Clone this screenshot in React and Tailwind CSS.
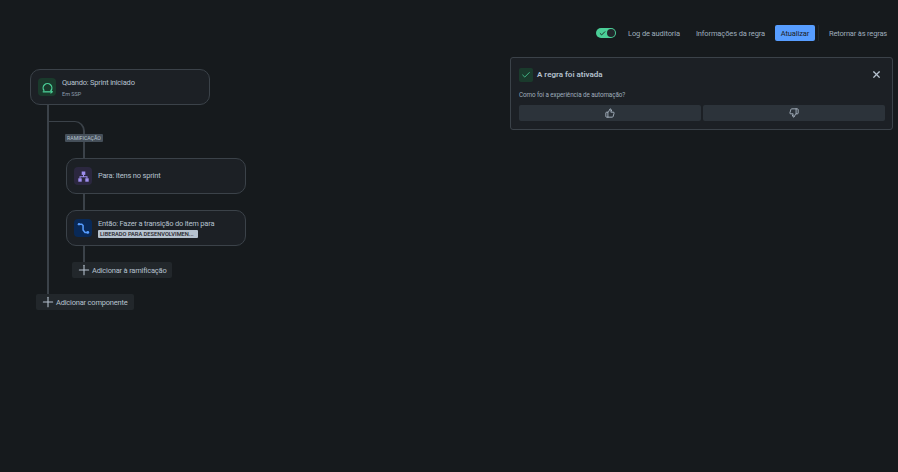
import { Check, Plus, ThumbsDown, ThumbsUp, X } from 'lucide-react'

function NodeCard({ className, icon, iconBg, children }) {
  return (
    <div className={`flex items-center w-[180px] h-[36px] rounded-[10px] border border-[#3b4249] bg-[#1c2025] pl-[7px] gap-[6px] ${className || ''}`}>
      <div className={`w-[18px] h-[18px] rounded-[4px] flex items-center justify-center shrink-0 ${iconBg}`}>
        {icon}
      </div>
      <div className="min-w-0">{children}</div>
    </div>
  )
}

function TriggerIcon() {
  return (
    <svg width="13" height="13" viewBox="0 0 12 12" fill="none" stroke="#4bce97" strokeWidth="1.2">
      <path d="M3 9 A4 4 0 1 1 9 9" />
      <path d="M1.6 10 H10.4" />
      <path d="M8.8 8.6 L10.4 10 L8.8 11.4" strokeWidth="1" />
    </svg>
  )
}

function BranchIcon() {
  return (
    <svg width="11" height="11" viewBox="0 0 11 11" fill="#9f8fef">
      <rect x="3.7" y="0.5" width="3.6" height="3.4" />
      <rect x="0.3" y="7.3" width="3.4" height="3.4" />
      <rect x="7.3" y="7.3" width="3.4" height="3.4" />
      <path d="M5 3.5h1v1.7h3.5v2.4h-1V6.2H2.5v1.4h-1V5.2H5z" />
    </svg>
  )
}

function TransitionIcon() {
  return (
    <svg width="13" height="13" viewBox="0 0 12 12" fill="none" stroke="#579dff" strokeWidth="1.4">
      <path d="M1.8 2 H4.4 L5.6 3.2 V7.4 L7.4 9.6 H10" />
      <circle cx="1.8" cy="2" r="1.1" fill="#579dff" stroke="none" />
      <circle cx="10" cy="9.6" r="1.3" fill="#579dff" stroke="none" />
    </svg>
  )
}

function AddButton({ label, className }) {
  return (
    <div className={`flex items-center h-[16px] bg-[#22272b] rounded-[2px] text-[7.5px] tracking-[-0.2px] text-[#b6c2cf] pl-[4px] whitespace-nowrap ${className}`}>
      <Plus size={16} strokeWidth={1.6} />
      <span className="pt-[1px]">{label}</span>
    </div>
  )
}

export default function App() {
  return (
    <div className="w-[898px] h-[472px] overflow-hidden bg-[#161a1d] text-[#b6c2cf] font-['Roboto',sans-serif] antialiased">
      <header className="flex items-center justify-end h-[16px] mt-[25px] pr-[11px] text-[7.5px] tracking-[-0.12px] text-[#9fadbc] whitespace-nowrap">
        <div className="w-[20px] h-[10px] rounded-full bg-[#4bce97] flex items-center justify-between pl-[3px] pr-[1px]">
          <Check size={7} strokeWidth={3} className="text-[#161a1d]" />
          <span className="w-[8px] h-[8px] rounded-full bg-[#22272b]" />
        </div>
        <span className="ml-[12px] pt-[1px]">Log de auditoria</span>
        <span className="ml-[16px] pt-[1px]">Informações da regra</span>
        <span className="ml-[10px] w-[40px] h-[16px] pt-[1px] rounded-[2px] bg-[#579dff] text-[#1d2125] flex items-center justify-center">Atualizar</span>
        <span className="ml-[3px] mr-[10px] w-px h-[16px] bg-[#22272b]" />
        <span className="pt-[1px] tracking-[-0.18px]">Retornar às regras</span>
      </header>

      <main className="flex justify-between pr-[5px]">
        <div className="pl-[30px] pt-[28px]">
          <NodeCard icon={<TriggerIcon />} iconBg="bg-[#1a3a2c]">
            <p className="text-[7.5px] tracking-[-0.2px] leading-[11px] text-[#b6c2cf]">Quando: Sprint iniciado</p>
            <p className="text-[5.5px] leading-[7px] mt-[3px] text-[#8c9bab]">Em SSP</p>
          </NodeCard>
          <div className="ml-[17px] w-fit border-l-2 border-[#3b4249] pt-[16px] pb-[16px]">
            <div className="relative ml-[-1px] w-[37px] h-[37px] border-t border-r-2 border-[#3b4249] rounded-tr-[10px]">
              <span className="absolute left-[17px] top-[12px] h-[8px] w-[38px] rounded-[1px] bg-[#454f59] text-[5.2px] leading-[8px] text-center text-[#b6c2cf]">RAMIFICAÇÃO</span>
            </div>
            <div className="ml-[17px]">
              <NodeCard icon={<BranchIcon />} iconBg="bg-[#2b273f]">
                <p className="text-[7.5px] tracking-[-0.2px] text-[#b6c2cf]">Para: Itens no sprint</p>
              </NodeCard>
              <div className="ml-[17px] w-0.5 h-[16px] bg-[#3b4249]" />
              <NodeCard icon={<TransitionIcon />} iconBg="bg-[#092957]">
                <p className="text-[7.5px] tracking-[-0.2px] leading-[11px] whitespace-nowrap text-[#b6c2cf]">Então: Fazer a transição do item para</p>
                <p className="w-[100px] h-[8px] mt-[1px] rounded-[1px] bg-[#b6c2cf] text-[#1d2125] text-[5.7px] leading-[8px] pl-[2px] font-medium whitespace-nowrap">LIBERADO PARA DESENVOLVIMEN...</p>
              </NodeCard>
              <div className="ml-[17px] w-0.5 h-[16px] bg-[#3b4249]" />
              <AddButton label="Adicionar à ramificação" className="ml-[6px] w-[100px]" />
            </div>
          </div>
          <AddButton label="Adicionar componente" className="ml-[6px] w-[98px]" />
        </div>

        <aside className="w-[383px] h-[73px] mt-[16px] rounded-[3px] border border-[#3b4249] bg-[#1c2025] pl-[8px] pr-[7px] pt-[9px]">
          <div className="flex items-center h-[15px]">
            <div className="w-[14px] h-[14px] rounded-[2px] bg-[#1a3a2c] flex items-center justify-center">
              <Check size={10} strokeWidth={2} className="text-[#4bce97]" />
            </div>
            <span className="ml-[4px] text-[8px] font-semibold text-[#b6c2cf]">A regra foi ativada</span>
            <X size={11} strokeWidth={2.6} className="ml-auto mr-[3px] mb-[1px] text-[#b6c2cf]" />
          </div>
          <p className="mt-[9px] text-[6.3px] tracking-[-0.08px] leading-[9px] text-[#9fadbc]">Como foi a experiência de automação?</p>
          <div className="flex gap-[2px] mt-[5px]">
            <div className="flex-1 h-[16px] rounded-[2px] bg-[#2c333a] flex items-center justify-center">
              <ThumbsUp size={10} strokeWidth={2} />
            </div>
            <div className="flex-1 h-[16px] rounded-[2px] bg-[#2c333a] flex items-center justify-center">
              <ThumbsDown size={10} strokeWidth={2} />
            </div>
          </div>
        </aside>
      </main>
    </div>
  )
}
